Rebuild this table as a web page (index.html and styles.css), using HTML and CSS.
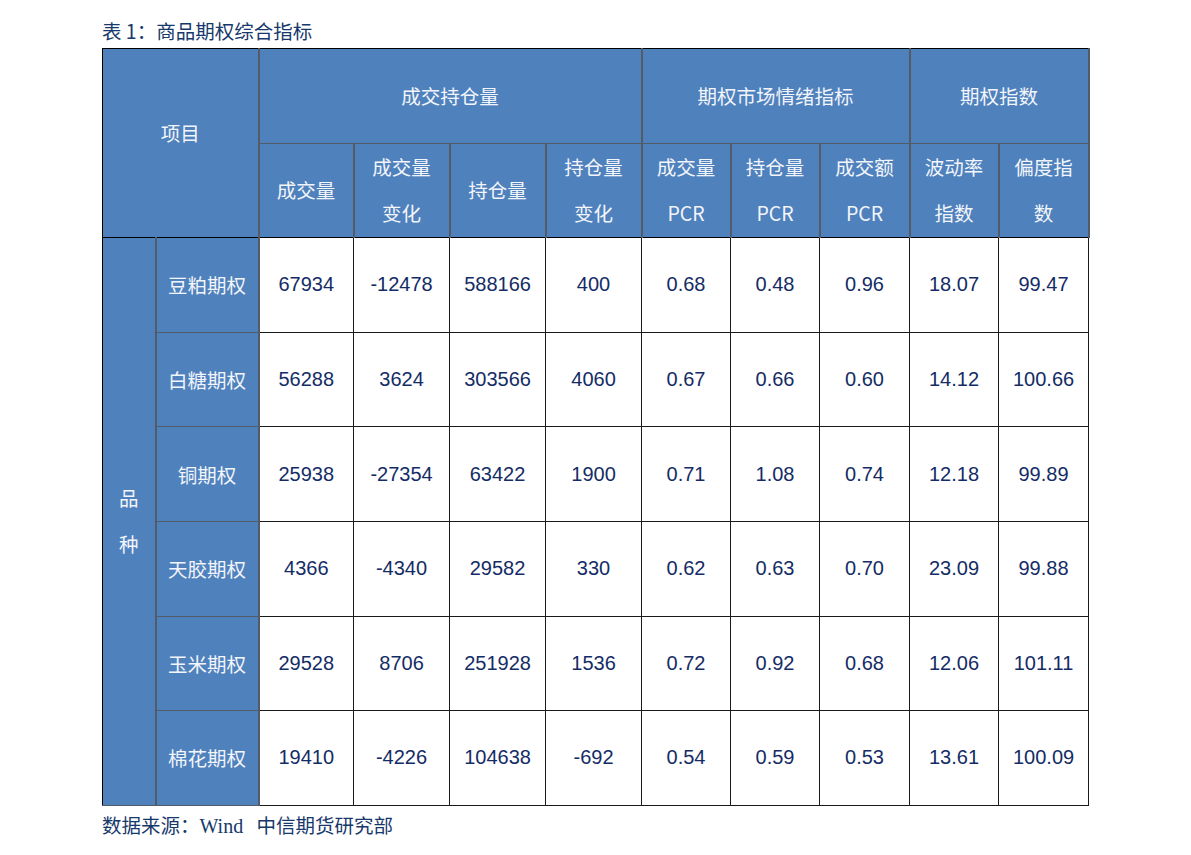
FILE: index.html
```html
<!DOCTYPE html>
<html lang="zh">
<head>
<meta charset="utf-8">
<link rel="stylesheet" href="styles.css">
</head>
<body>
<div class="page">
  <div class="title">表 1：商品期权综合指标</div>
  <table class="grid">
    <colgroup>
      <col style="width:53px"><col style="width:103px"><col style="width:95px"><col style="width:96px"><col style="width:96px"><col style="width:96px"><col style="width:89px"><col style="width:89px"><col style="width:90px"><col style="width:89px"><col style="width:90px">
    </colgroup>
    <tr class="h1">
      <th class="hd" colspan="2" rowspan="2"><span class="up">项目</span></th>
      <th class="hd" colspan="4">成交持仓量</th>
      <th class="hd" colspan="3">期权市场情绪指标</th>
      <th class="hd" colspan="2">期权指数</th>
    </tr>
    <tr class="h2">
      <th class="hd">成交量</th>
      <th class="hd two">成交量<br>变化</th>
      <th class="hd">持仓量</th>
      <th class="hd two">持仓量<br>变化</th>
      <th class="hd two">成交量<br>PCR</th>
      <th class="hd two">持仓量<br>PCR</th>
      <th class="hd two">成交额<br>PCR</th>
      <th class="hd two">波动率<br>指数</th>
      <th class="hd two">偏度指<br>数</th>
    </tr>
    <tr>
      <th class="hd side" rowspan="6">品<br>种</th>
      <th class="hd name">豆粕期权</th>
      <td>67934</td><td>-12478</td><td>588166</td><td>400</td><td>0.68</td><td>0.48</td><td>0.96</td><td>18.07</td><td>99.47</td>
    </tr>
    <tr>
      <th class="hd name">白糖期权</th>
      <td>56288</td><td>3624</td><td>303566</td><td>4060</td><td>0.67</td><td>0.66</td><td>0.60</td><td>14.12</td><td>100.66</td>
    </tr>
    <tr>
      <th class="hd name">铜期权</th>
      <td>25938</td><td>-27354</td><td>63422</td><td>1900</td><td>0.71</td><td>1.08</td><td>0.74</td><td>12.18</td><td>99.89</td>
    </tr>
    <tr>
      <th class="hd name">天胶期权</th>
      <td>4366</td><td>-4340</td><td>29582</td><td>330</td><td>0.62</td><td>0.63</td><td>0.70</td><td>23.09</td><td>99.88</td>
    </tr>
    <tr>
      <th class="hd name">玉米期权</th>
      <td>29528</td><td>8706</td><td>251928</td><td>1536</td><td>0.72</td><td>0.92</td><td>0.68</td><td>12.06</td><td>101.11</td>
    </tr>
    <tr>
      <th class="hd name">棉花期权</th>
      <td>19410</td><td>-4226</td><td>104638</td><td>-692</td><td>0.54</td><td>0.59</td><td>0.53</td><td>13.61</td><td>100.09</td>
    </tr>
  </table>
  <div class="source">数据来源：<span class="latin">Wind</span> 中信期货研究部</div>
</div>
</body>
</html>
```
FILE: styles.css
```css
html, body {
  margin: 0;
  padding: 0;
  background: #ffffff;
}
.page {
  padding: 18px 0 0 102px;
}
.title {
  font-family: "Noto Sans CJK SC", "Liberation Sans", sans-serif;
  font-size: 19.5px;
  line-height: 26px;
  height: 30px;
  color: #17386b;
}
.grid {
  border-collapse: collapse;
  table-layout: fixed;
  width: 987px;
  border: 1px solid #000;
}
.grid th, .grid td {
  padding: 0;
  text-align: center;
  vertical-align: middle;
  height: 93.6px;
}
.hd {
  background: #4f81bd;
  color: #f2f5fa;
  font-family: "Noto Sans CJK SC", sans-serif;
  font-weight: normal;
  font-size: 19.5px;
  border: 2px solid #535b66;
  border-top: 1px solid #535b66;
  border-bottom: 1px solid #535b66;
}
.h1 .hd {
  border-top: 1px solid #000;
}
.h2 .hd {
  border-bottom: 1px solid #000;
  line-height: 46px;
}
.h1 .hd[rowspan] {
  border-left: 1px solid #000;
  border-bottom: 1px solid #000;
}
.up {
  position: relative;
  top: -11px;
}
.side {
  border-left: 1px solid #000;
  line-height: 46px;
}
.grid td {
  font-family: "Liberation Sans", Arial, sans-serif;
  font-size: 20px;
  color: #142c66;
  border: 1px solid #1a1a1a;
  background: #ffffff;
}
.source {
  font-family: "Noto Sans CJK SC", sans-serif;
  font-size: 19.5px;
  line-height: 26px;
  color: #17386b;
  padding-top: 6px;
}
.latin {
  font-family: "Liberation Serif", serif;
  font-size: 20px;
  margin-right: 9px;
}
```
